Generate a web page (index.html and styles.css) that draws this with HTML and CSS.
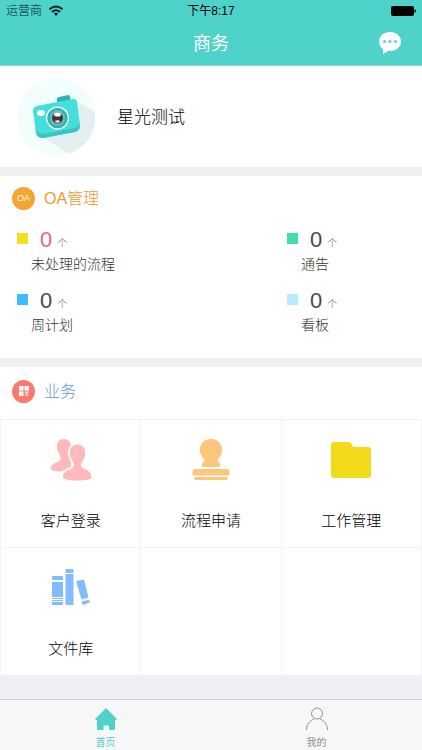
FILE: index.html
```html
<!DOCTYPE html>
<html lang="zh-CN">
<head>
  <meta charset="UTF-8" />
  <meta name="viewport" content="width=device-width, initial-scale=1.0"/>
  <title>商务</title>
  <link rel="stylesheet" href="styles.css">
</head>
<body>
  <header>
    <div class="status-bar">
      <div class="carrier">
        <span>运营商</span>
        <svg width="16" height="12" viewBox="0 0 16 12" fill="none" stroke="#06201e" stroke-width="2">
          <path d="M1.5 4.2Q8-1.2 14.5 4.2M4 7Q8 3.6 12 7"/>
          <path d="M5.8 8.6Q8 6.8 10.2 8.6L8 11z" fill="#06201e" stroke="none"/>
        </svg>
      </div>
      <time>下午8:17</time>
      <svg class="battery" width="25" height="10" viewBox="0 0 25 10">
        <rect width="23" height="10" rx="2"/>
        <path d="M23.5 3.2Q25 3.5 25 5T23.5 6.8z"/>
      </svg>
    </div>
    <div class="title-bar">
      <h1>商务</h1>
      <button class="chat" type="button" aria-label="消息">
        <svg width="24" height="24" viewBox="0 0 24 24">
          <path d="M12 1C5.800 1 1 5.200 1 10.500C1 13.800 2.700 16.400 5.200 18.200L5 23L10.200 19.900L12 20C18.200 20 23 15.800 23 10.500S18.200 1 12 1z" fill="#fff"/>
          <g fill="#4fd2ca"><circle cx="6.500" cy="10.600" r="1.500"/><circle cx="12" cy="10.600" r="1.500"/><circle cx="17.500" cy="10.600" r="1.500"/></g>
        </svg>
      </button>
    </div>
  </header>

  <main>
    <section class="profile">
      <svg class="avatar" width="78" height="78" viewBox="0 0 78 78">
        <circle cx="39" cy="39" r="39" fill="#f1fefc"/>
        <path d="M59 23L78 34A39 39 0 0 1 52 76L24 58z" fill="#e5eff1"/>
        <path d="M40 24V21Q40 19 42 19L51 17Q53 17 53 19L54 24z" fill="#2fb1b4"/>
        <path d="M20 28L55 21Q59 20 60 24L63 47Q63 53 58 54L26 60Q20 60 19 54L16 33Q16 29 20 28z" fill="#46dedb"/>
        <path d="M18 50Q20 56 26 56L57 50Q62 49 63 45Q64 52 58 54L26 60Q20 60 19 54z" fill="#36c6c8"/>
        <ellipse cx="24" cy="35" rx="4" ry="3" fill="#fff"/>
        <circle cx="40.500" cy="40" r="11.500" fill="#fff"/>
        <circle cx="40.500" cy="40" r="10.300" fill="#2fb4b7"/>
        <circle cx="40.500" cy="40" r="7.500" fill="#6cc0c0"/>
        <circle cx="40.500" cy="40" r="5.500" fill="#443634"/>
        <ellipse cx="40.500" cy="36.500" rx="3.500" ry="2" fill="#fff"/>
        <ellipse cx="40.500" cy="43.500" rx="2.500" ry="1.200" fill="#dce9e9"/>
      </svg>
      <h2>星光测试</h2>
    </section>

    <section class="panel oa">
      <div class="panel-title">
        <span class="badge">OA</span>
        <h3>OA管理</h3>
      </div>
      <div class="stats">
        <div class="stat yellow">
          <div class="count"><b>0</b><small>个</small></div>
          <div class="label">未处理的流程</div>
        </div>
        <div class="stat green">
          <div class="count"><b>0</b><small>个</small></div>
          <div class="label">通告</div>
        </div>
        <div class="stat blue">
          <div class="count"><b>0</b><small>个</small></div>
          <div class="label">周计划</div>
        </div>
        <div class="stat pale">
          <div class="count"><b>0</b><small>个</small></div>
          <div class="label">看板</div>
        </div>
      </div>
    </section>

    <section class="panel business">
      <div class="panel-title">
        <span class="badge">
          <svg width="12" height="12" viewBox="0 0 12 12" fill="#fff">
            <path d="M1 1h4.500v4.500H1zM6.500 1H11v4.500H6.500zM1 6.500h4.500V11H1z"/>
            <path d="M7 6.500h4v1.500H9l2 3H9.500L8 9v2H7z" opacity=".65"/>
          </svg>
        </span>
        <h3>业务</h3>
      </div>
      <div class="tiles">
        <a class="tile" href="#">
          <svg width="42" height="42" viewBox="0 0 42 42">
            <g fill="#ffb9bb">
              <path d="M14 0C9.500 0 7 3 7 7.500C7 11 8.200 14 10.300 17C12 20 10 22 7 23.200C3.500 24.500 1 26 .700 29C.500 31 4 32 9.500 32.500L21 30V6C20 2 17.500 0 14 0z"/>
              <path d="M27.500 5.500C22.500 5.500 19.800 9 19.800 14C19.800 17.500 21 20.500 23.300 23.500C25 27 23 29 19.500 30.500C15.500 32 13 34 13 37.500C13 40.500 19 41.500 27.500 41.500S41.500 40.500 41.500 37.500C41.500 34 39 32 35.500 30.500C31.500 29 30 27 31.700 23.500C34 20.500 35.200 17.500 35.200 14C35.200 9 32.500 5.500 27.500 5.500z" stroke="#fff" stroke-width="3.600" paint-order="stroke"/>
            </g>
          </svg>
          <span>客户登录</span>
        </a>
        <a class="tile" href="#">
          <svg width="42" height="42" viewBox="0 0 42 42" fill="#fdc67d">
            <path d="M21 0C14.500 0 9.800 4.800 9.800 11C9.800 15 11.500 17.500 13.500 19.500C15 21 14.500 22.500 13 23.500C11 25 11 28 13.500 28H28.500C31 28 31 25 29 23.500C27.500 22.500 27 21 28.500 19.500C30.500 17.500 32.200 15 32.200 11C32.200 4.800 27.500 0 21 0z"/>
            <path d="M5 30H37Q39.500 30 39.500 33V36.500H2.500V33Q2.500 30 5 30zM4.500 38H37.500V41H4.500z"/>
          </svg>
          <span>流程申请</span>
        </a>
        <a class="tile" href="#">
          <svg width="42" height="42" viewBox="0 0 42 42">
            <path d="M4 3H18.500Q20 3 21 4.500L23.500 8H38Q41 8 41 11V36Q41 39 38 39H4Q1 39 1 36V6Q1 3 4 3z" fill="#f2da1b"/>
          </svg>
          <span>工作管理</span>
        </a>
        <a class="tile" href="#">
          <svg width="42" height="42" viewBox="0 0 42 42" fill="#81bcff">
            <path d="M3 9H12Q13 9 13 10V13H2V10Q2 9 3 9zM2 15H13V30H2zM2 31H13V32H2zM2 33H13V34H2zM2 35H13V37Q13 38 12 38H3Q2 38 2 37z"/>
            <path d="M16.500 2H22.500Q23.500 2 23.500 3V6H15.500V3Q15.500 2 16.500 2zM15.500 7H23.500V37Q23.500 38 22.500 38H16.500Q15.500 38 15.500 37z"/>
            <path d="M27 14L33 12.500Q34 12.500 34.300 13.500L38.500 30.500L31.500 32.500L26.200 15Q26 14.200 27 14zM31.500 34.500L39 32.800L40 35.500L32.500 38z"/>
          </svg>
          <span>文件库</span>
        </a>
        <div class="tile"></div>
        <div class="tile"></div>
      </div>
    </section>
  </main>

  <nav>
    <a class="active" href="#">
      <svg width="24" height="24" viewBox="0 0 24 24">
        <path d="M12 1L23 12L22 13H21V22Q21 23 20 23H15V18.500H9.500V23H4Q3 23 3 22V13H2L1 12z" fill="#4fd2ca"/>
      </svg>
      <span>首页</span>
    </a>
    <a href="#">
      <svg width="24" height="24" viewBox="0 0 24 24" fill="none" stroke="#929292">
        <circle cx="12" cy="6.500" r="5.500"/>
        <path d="M1.500 23C1.500 17 5 13.500 9 12.200M15 12.200C19 13.500 22.500 17 22.500 23"/>
      </svg>
      <span>我的</span>
    </a>
  </nav>
</body>
</html>
```
FILE: styles.css
```css
* {
  box-sizing: border-box;
}

body {
  margin: 0;
  min-height: 100vh;
  display: flex;
  flex-direction: column;
  background-color: #efeff4;
  font-family: "Liberation Sans", "Noto Sans CJK SC", sans-serif;
  font-weight: 300;
  color: #000;
}

h1, h2, h3 {
  margin: 0;
  font-weight: 300;
}

a {
  color: inherit;
  text-decoration: none;
}

svg {
  display: block;
  flex: none;
}

header {
  background-color: #4fd2ca;
  border-bottom: 1px solid #8fd9d4;
}

.status-bar {
  display: grid;
  grid-template-columns: 1fr auto 1fr;
  align-items: center;
  height: 21px;
  padding: 0 6px;
  font-size: 12px;
  line-height: 20px;
  color: #06201e;
}

.status-bar time {
  font-weight: 400;
  color: #000;
}

.carrier {
  display: flex;
  align-items: center;
  gap: 6px;
}

.battery {
  justify-self: end;
}

.title-bar {
  display: grid;
  grid-template-columns: 1fr auto 1fr;
  align-items: center;
  height: 44px;
  padding: 0 20px;
  color: #fff;
}

.title-bar h1 {
  grid-column: 2;
  padding-top: 2px;
  font-size: 18px;
  font-weight: 400;
  line-height: 24px;
}

.chat {
  justify-self: end;
  padding: 0;
  border: 0;
  background: none;
}

.profile {
  display: flex;
  align-items: center;
  gap: 22px;
  padding: 12px 17px 11px;
  background-color: #fff;
}

.profile h2 {
  padding-top: 2px;
  font-size: 17px;
  line-height: 24px;
}

.panel {
  margin-top: 9px;
  background-color: #fff;
}

.panel-title {
  display: flex;
  align-items: center;
  gap: 9px;
  padding: 0 12px;
  height: 44px;
}

.panel-title h3 {
  padding-top: 2px;
  font-size: 16px;
  line-height: 24px;
}

.badge {
  display: flex;
  align-items: center;
  justify-content: center;
  width: 23px;
  height: 23px;
  border-radius: 50%;
  font-size: 9px;
  color: #fff;
}

.oa { padding-bottom: 21px; }
.oa h3 { color: #ee9a2b; }
.oa .badge { background-color: #f4a62f; }

.business .panel-title { height: 52px; padding-bottom: 4px; }
.business h3 { color: #5b98d8; }
.business .badge { background-color: #fb7a70; }

.stats {
  display: grid;
  grid-template-columns: 2fr 1fr;
  row-gap: 13px;
  padding: 8px 0 0 17px;
}

.count {
  display: flex;
  align-items: baseline;
  height: 24px;
  line-height: 24px;
}

.count::before {
  content: "";
  width: 11px;
  height: 11px;
  margin: 0 12px 4px 0;
  align-self: center;
  background-color: var(--mark);
}

.count b {
  font-size: 22px;
  font-weight: 400;
  color: #4a4a4a;
}

.count small {
  margin-left: 5px;
  font-size: 10px;
  color: #666;
}

.label {
  padding-left: 14px;
  font-size: 14px;
  line-height: 24px;
  color: #333;
}

.yellow { --mark: #f5e11a; }
.yellow b { color: #f0637f; }
.green { --mark: #42dcb0; }
.blue { --mark: #40bbfc; }
.pale { --mark: #b7eaff; }

.tiles {
  display: grid;
  grid-template-columns: repeat(3, 1fr);
  border-top: 1px solid #f2f2f4;
  border-left: 1px solid #f2f2f4;
}

.tile {
  display: flex;
  flex-direction: column;
  align-items: center;
  gap: 28px;
  height: 128px;
  padding-top: 19px;
  border-right: 1px solid #f2f2f4;
  border-bottom: 1px solid #f2f2f4;
  font-size: 15px;
  line-height: 24px;
}

nav {
  display: flex;
  margin-top: auto;
  height: 51px;
  border-top: 1px solid #cfcfd3;
  background-color: #f7f7f8;
}

nav a {
  flex: 1;
  display: flex;
  flex-direction: column;
  align-items: center;
  gap: 5px;
  padding-top: 7px;
  font-size: 10px;
  font-weight: 400;
  line-height: 14px;
  color: #929292;
}

nav .active {
  color: #4fd2ca;
}
```
